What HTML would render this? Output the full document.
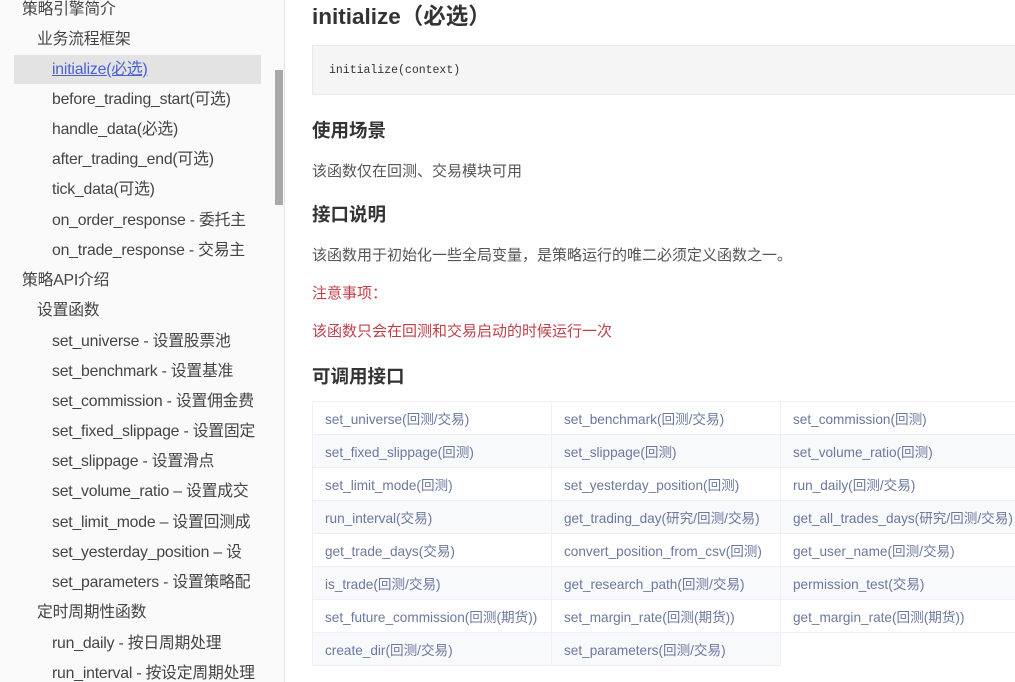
<!DOCTYPE html>
<html><head><meta charset="utf-8">
<style>
*{margin:0;padding:0;box-sizing:border-box}
html,body{width:1015px;height:682px;overflow:hidden;background:#fff;font-family:"Liberation Sans","Noto Sans CJK SC",sans-serif}
#side{position:absolute;left:0;top:0;width:285px;height:682px;background:#fafafa;border-right:1px solid #e6e6e6;overflow:hidden}
#side .it{position:absolute;height:30px;line-height:30px;font-size:15.8px;color:#444;white-space:nowrap;letter-spacing:-0.2px}
#side .l1{left:22px}#side .l2{left:37px}#side .l3{left:52px}
#hl{position:absolute;left:14px;top:55px;width:247px;height:29px;background:#e3e3e3}
#sb{position:absolute;left:275px;top:70px;width:8px;height:135px;background:#a9a9a9}
#main{position:absolute;left:312px;top:0;right:0}
h1{position:absolute;top:-1px;left:0;font-size:22.5px;font-weight:bold;color:#333;white-space:nowrap}
.code{position:absolute;top:45px;left:0;width:710px;height:50px;background:#f5f5f5;border:1px solid #eaeaea;font-family:"Liberation Mono",monospace;font-size:11.5px;color:#333;padding:18px 16px}
h3{position:absolute;left:0;font-size:18.5px;font-weight:bold;color:#333;white-space:nowrap}
p{position:absolute;left:0;font-size:15px;color:#555;white-space:nowrap}
p.red{color:#c0404a}
table{position:absolute;left:0;top:401px;border-collapse:collapse;font-size:13.6px;color:#6b789f;table-layout:fixed;width:710px}
td{border:1px solid #eef0f3;height:33px;padding:0 12px;white-space:nowrap;overflow:visible}
tr:nth-child(even) td{background:#f8f9fb}
</style></head><body>
<div id="side">
<div id="hl"></div>
<div id="sb"></div>
<div class="it l1" style="top:-5px">策略引擎简介</div>
<div class="it l2" style="top:25px">业务流程框架</div>
<div class="it l3" style="top:55px;color:#4a5fd0;text-decoration:underline">initialize(必选)</div>
<div class="it l3" style="top:85px">before_trading_start(可选)</div>
<div class="it l3" style="top:115px">handle_data(必选)</div>
<div class="it l3" style="top:145px">after_trading_end(可选)</div>
<div class="it l3" style="top:175px">tick_data(可选)</div>
<div class="it l3" style="top:206px">on_order_response - 委托主</div>
<div class="it l3" style="top:236px">on_trade_response - 交易主</div>
<div class="it l1" style="top:266px">策略API介绍</div>
<div class="it l2" style="top:296px">设置函数</div>
<div class="it l3" style="top:327px">set_universe - 设置股票池</div>
<div class="it l3" style="top:357px">set_benchmark - 设置基准</div>
<div class="it l3" style="top:387px">set_commission - 设置佣金费</div>
<div class="it l3" style="top:417px">set_fixed_slippage - 设置固定</div>
<div class="it l3" style="top:447px">set_slippage - 设置滑点</div>
<div class="it l3" style="top:477px">set_volume_ratio – 设置成交</div>
<div class="it l3" style="top:508px">set_limit_mode – 设置回测成</div>
<div class="it l3" style="top:538px">set_yesterday_position – 设</div>
<div class="it l3" style="top:568px">set_parameters - 设置策略配</div>
<div class="it l2" style="top:598px">定时周期性函数</div>
<div class="it l3" style="top:629px">run_daily - 按日周期处理</div>
<div class="it l3" style="top:659px">run_interval - 按设定周期处理</div>
</div>
<div id="main">
<h1>initialize（必选）</h1>
<div class="code">initialize(context)</div>
<h3 style="top:117px">使用场景</h3>
<p style="top:160px">该函数仅在回测、交易模块可用</p>
<h3 style="top:201px">接口说明</h3>
<p style="top:244px">该函数用于初始化一些全局变量，是策略运行的唯二必须定义函数之一。</p>
<p class="red" style="top:282px">注意事项：</p>
<p class="red" style="top:320px">该函数只会在回测和交易启动的时候运行一次</p>
<h3 style="top:363px">可调用接口</h3>
<table>
<colgroup><col style="width:239px"><col style="width:229px"><col style="width:242px"></colgroup>
<tr><td>set_universe(回测/交易)</td><td>set_benchmark(回测/交易)</td><td>set_commission(回测)</td></tr>
<tr><td>set_fixed_slippage(回测)</td><td>set_slippage(回测)</td><td>set_volume_ratio(回测)</td></tr>
<tr><td>set_limit_mode(回测)</td><td>set_yesterday_position(回测)</td><td>run_daily(回测/交易)</td></tr>
<tr><td>run_interval(交易)</td><td>get_trading_day(研究/回测/交易)</td><td>get_all_trades_days(研究/回测/交易)</td></tr>
<tr><td>get_trade_days(交易)</td><td>convert_position_from_csv(回测)</td><td>get_user_name(回测/交易)</td></tr>
<tr><td>is_trade(回测/交易)</td><td>get_research_path(回测/交易)</td><td>permission_test(交易)</td></tr>
<tr><td>set_future_commission(回测(期货))</td><td>set_margin_rate(回测(期货))</td><td>get_margin_rate(回测(期货))</td></tr>
<tr><td>create_dir(回测/交易)</td><td>set_parameters(回测/交易)</td><td style="border:none;background:#fff"></td></tr>
</table>
</div>
</body></html>
